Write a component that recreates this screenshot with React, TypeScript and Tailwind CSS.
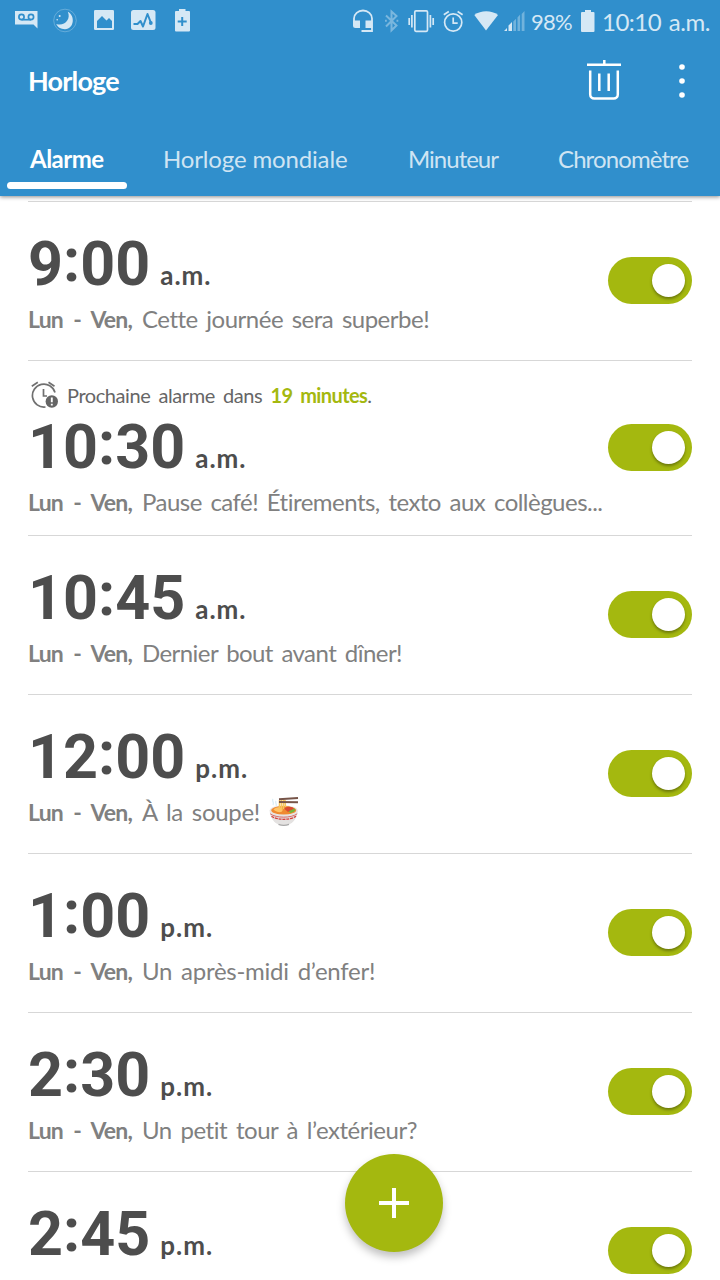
import React, { useState } from "react";
import clsx from "clsx";

interface Alarm {
    id: number;
    hour: string;
    minute: string;
    period: string;
    label: string;
    tracking: string;
    next?: boolean;
    soup?: boolean;
}

const alarms: Alarm[] = [
    { id: 1, hour: "9", minute: "00", period: "a.m.", label: "Cette journée sera superbe!", tracking: "tracking-[-0.5px]" },
    { id: 2, hour: "10", minute: "30", period: "a.m.", label: "Pause café! Étirements, texto aux collègues...", tracking: "tracking-[-0.52px]", next: true },
    { id: 3, hour: "10", minute: "45", period: "a.m.", label: "Dernier bout avant dîner!", tracking: "tracking-[-0.57px]" },
    { id: 4, hour: "12", minute: "00", period: "p.m.", label: "À la soupe!", tracking: "tracking-[-0.3px]", soup: true },
    { id: 5, hour: "1", minute: "00", period: "p.m.", label: "Un après-midi d’enfer!", tracking: "tracking-[-0.26px]" },
    { id: 6, hour: "2", minute: "30", period: "p.m.", label: "Un petit tour à l’extérieur?", tracking: "tracking-[-0.45px]" },
    { id: 7, hour: "2", minute: "45", period: "p.m.", label: "Une pause santé", tracking: "tracking-[-0.5px]" },
];

const tabs = [
    { name: "Alarme", className: "ml-[30px] w-[133px] font-bold text-white tracking-[-0.5px]" },
    { name: "Horloge mondiale", className: "w-[245px] tracking-[-0.15px]" },
    { name: "Minuteur", className: "w-[150px] tracking-[-1px]" },
    { name: "Chronomètre", className: "w-[134px] tracking-[-0.9px]" },
];

function StatusBar() {
    return (
        <div className="flex h-11 text-[#d5e8f5]">
            <svg className="ml-[15px]" width="23" height="44" fill="currentColor">
                <path d="M0 11h22.500v17.500l-4-4H0z" />
                <g fill="none" stroke="#308fcc" strokeWidth="1.700">
                    <circle cx="6.500" cy="17" r="2.600" />
                    <circle cx="16" cy="17" r="2.600" />
                    <path d="M6.500 19.700H16" />
                </g>
            </svg>
            <svg className="ml-[15px]" width="24" height="44" fill="currentColor">
                <circle cx="12" cy="20.500" r="11.300" fill="none" stroke="currentColor" strokeWidth="0.900" opacity="0.35" />
                <path d="M14.800 11.800c7.500 3.700 6.700 17-2.800 17.400-4.500 0-7.500-2.200-8.700-5.200 8 2.500 15-4.500 11.500-12.200z" />
                <circle cx="6.700" cy="16" r="1" />
                <circle cx="4.200" cy="19.800" r="0.800" />
            </svg>
            <svg className="ml-[17px]" width="20" height="44" fill="currentColor">
                <rect y="10" width="20" height="20" rx="1.300" />
                <path d="M3 28v-7l5-5 4.500 4.500L15 18l3 3v7z" fill="#308fcc" />
            </svg>
            <svg className="ml-[17px]" width="25" height="44" fill="currentColor">
                <rect y="10" width="24.500" height="20" rx="2.500" />
                <path d="M2.500 24h4l3-3 2.500 5.500 4.500-12.500 3.500 9" fill="none" stroke="#308fcc" strokeWidth="2" strokeLinejoin="round" />
                <circle cx="19.800" cy="23" r="1.900" fill="#308fcc" />
            </svg>
            <svg className="ml-[19px]" width="16" height="44" fill="currentColor">
                <path d="M4 9h6.500v2H14a1 1 0 0 1 1 1v18.500a1 1 0 0 1-1 1H1a1 1 0 0 1-1-1V12a1 1 0 0 1 1-1h3z" />
                <path d="M7.200 17v9M2.700 21.500h9" stroke="#308fcc" strokeWidth="2" />
            </svg>

            <svg className="ml-[162px]" width="21" height="44" fill="none" stroke="currentColor">
                <path d="M1 23v-4.500a9 8 0 0 1 18 0V31H8.500" strokeWidth="1.800" />
                <path d="M0 20.500h7V28H2.500A2.500 2.500 0 0 1 0 25.500zM12.500 20.500h7V28h-7z" fill="currentColor" stroke="none" />
            </svg>
            <svg className="ml-[11px] opacity-45" width="14" height="44" fill="none" stroke="currentColor" strokeWidth="2">
                <path d="m1 15.500 10.500 10-5 4.800V11.500l5 4.500L1 26.500M0 20.700h1.800M11.500 20.700h1.800" />
            </svg>
            <svg className="ml-[9px]" width="27" height="44" fill="none" stroke="currentColor" strokeWidth="1.700">
                <rect x="6.800" y="10.800" width="12.700" height="20.500" rx="1.200" />
                <path d="M3.900 15v12.500M1.200 18v7M22.400 15v12.500M25.200 18v7" />
            </svg>
            <svg className="ml-[8px]" width="21" height="44" fill="none" stroke="currentColor" strokeWidth="1.700">
                <circle cx="10.200" cy="22.500" r="8.600" />
                <path d="M10.200 17.500v5.700h4.500M.8 14.800l5-3.300M14.600 11.500l5 3.300" />
            </svg>
            <svg className="ml-[10px]" width="25" height="44" fill="currentColor">
                <path d="M.3 15C7 10 17.500 10 24 15L12 30.500z" />
            </svg>
            <svg className="ml-[5px]" width="22" height="44" fill="currentColor">
                <path d="M0 31l3-3v3zM4.500 31v-5.500L8 22v9z" />
                <path d="M9.300 31V21.500l2.700-2.800V31zM13.500 31V17.500l2.600-3V31zM17.700 31V14l2.800-3v20z" opacity="0.4" />
            </svg>
            <span className="ml-[5px] w-[50px] text-[22px] leading-[44px] tracking-[-0.7px] whitespace-nowrap">98%</span>
            <svg width="14" height="44" fill="currentColor">
                <path d="M4 10h6v2h2.500a1 1 0 0 1 1 1v18a1 1 0 0 1-1 1H1a1 1 0 0 1-1-1V13a1 1 0 0 1 1-1h3z" />
            </svg>
            <span className="ml-[7px] text-[24px] leading-[44px] tracking-[-0.5px] [word-spacing:2px] whitespace-nowrap">10:10 a.m.</span>
        </div>
    );
}

function NextAlarmIcon() {
    return (
        <svg className="mr-[8px]" width="28" height="28" viewBox="0 0 28 28" fill="none" stroke="#707070" strokeWidth="1.700">
            <path d="M24 11.500A11.500 11.500 0 1 0 14.500 26" />
            <path d="M12.500 8v7h3.500M.8 5.200l6-4M17.500 1.200l6 4" />
            <circle cx="20.800" cy="20.500" r="6.200" fill="#656565" stroke="none" />
            <path d="M20.800 16.500v4.800M20.800 22.800v1.800" stroke="#fff" strokeWidth="1.900" />
        </svg>
    );
}

function SoupIcon() {
    return (
        <svg className="ml-[9px] self-center" width="30" height="29" viewBox="0 0 30 29" fill="none">
            <path d="M4 2c-2 2 2 3 0 6M7 4c-1.500 2 1.500 3 0 5" stroke="#dceef5" strokeWidth="1.400" />
            <path d="M.7 13.500c0 7 4.500 12.500 9 14 3 .9 7 .9 10 0 4.500-1.500 9-7 9-14z" fill="#e4e2e1" />
            <ellipse cx="14.700" cy="13.500" rx="14" ry="5.300" fill="#e9e5e2" />
            <ellipse cx="14.700" cy="13.200" rx="12.500" ry="4.300" fill="#f08a30" />
            <path d="M4.500 12.500c3-3 8-3 9 0s-5 4-9 0z" fill="#ffc466" />
            <path d="M15 11.500c3-2.500 9-2 10 .5l-6 3z" fill="#d94b31" />
            <path d="m19.500 14.500 6-3c2 2-1.500 4-4 4.500z" fill="#6fb83d" />
            <path d="M10.500 3v9M12.500 3v10M14.500 3v9M16 3l.5 7" stroke="#f8c65b" strokeWidth="1.500" />
            <path d="M10 2.200 29 1M10 5l19 .3" stroke="#765448" strokeWidth="2" />
            <path d="M1.200 16.800c6 4.500 21 4.500 27 0" stroke="#d7504c" strokeWidth="0.800" />
            <path d="M2.500 19.300c6 4 18.500 4 24.500 0" stroke="#d7403c" strokeWidth="1.300" strokeDasharray="3 .8" />
            <path d="M9.500 27.300c3 1.200 7.500 1.200 10.500 0" stroke="#aaa" strokeWidth="1.300" />
        </svg>
    );
}

function Toggle() {
    const [on, setOn] = useState(true);
    return (
        <button
            onClick={() => setOn(!on)}
            className={clsx("flex h-[47px] w-[84px] shrink-0 items-center rounded-full px-[7px]", on ? "justify-end bg-[#a4b80f]" : "justify-start bg-gray-400")}
        >
            <span className="size-[33px] rounded-full bg-white shadow-[0_2px_3px_rgba(0,0,0,0.35)]" />
        </button>
    );
}

function AlarmRow({ alarm }: { alarm: Alarm }) {
    return (
        <div className={clsx("flex shrink-0 items-center justify-between border-t border-[#d7d7d7] pb-[2px]", alarm.next ? "h-[175px]" : "h-[159px]")}>
            <div className="flex h-full flex-col whitespace-nowrap">
                {alarm.next ? (
                    <div className="flex h-[53px] shrink-0 items-center pt-[14px] pl-[3px] text-[20px] text-[#666]">
                        <NextAlarmIcon />
                        <span className="tracking-[-0.43px] [word-spacing:3.500px]">
                            Prochaine alarme dans <b className="tracking-[-0.6px] text-[#a4b80f]">19 minutes</b>.
                        </span>
                    </div>
                ) : (
                    <div className="h-[29px] shrink-0" />
                )}
                <div className="flex h-[66px] shrink-0 items-baseline text-[#4d4d4d]">
                    <span className="font-['Roboto'] text-[61px] leading-[67px] font-bold">
                        {alarm.hour}
                        <span className="relative -top-[4px]">:</span>
                        {alarm.minute}
                    </span>
                    <span className="ml-[10px] text-[26px] font-bold tracking-[1px]">{alarm.period}</span>
                </div>
                <div className={clsx("flex h-[42px] shrink-0 items-baseline text-[24px] leading-[43px] text-[#808080] [word-spacing:3px]", alarm.tracking)}>
                    <span className="w-[114px] text-[23px] font-bold tracking-[-0.8px] [word-spacing:5.500px]">Lun - Ven,</span>
                    <span>{alarm.label}</span>
                    {alarm.soup && <SoupIcon />}
                </div>
            </div>
            <Toggle />
        </div>
    );
}

export default function App() {
    return (
        <div className="relative flex h-[1280px] w-[720px] flex-col overflow-hidden bg-white font-['Lato',sans-serif]">
            <header className="z-10 h-[196px] shrink-0 bg-[#308fcc] shadow-[0_1px_4px_rgba(0,0,0,0.45)]">
                <StatusBar />
                <div className="flex h-[73px] items-center pl-7 text-white">
                    <h1 className="pt-px text-[27px] font-bold tracking-[-0.8px]">Horloge</h1>
                    <svg className="ml-auto" width="34" height="42" viewBox="0 0 34 42" fill="none" stroke="currentColor" strokeWidth="2.500">
                        <path d="M0 4.700h34M17.300 0v5M3.200 10.500v24a4 4 0 0 0 4 4h19.600a4 4 0 0 0 4-4v-24M12.300 13.500V31M21.700 13.500V31" />
                    </svg>
                    <svg className="mr-[35px] ml-[58px]" width="6" height="36" viewBox="0 0 6 36" fill="currentColor">
                        <circle cx="3" cy="4" r="2.800" />
                        <circle cx="3" cy="18" r="2.800" />
                        <circle cx="3" cy="32" r="2.800" />
                    </svg>
                </div>
                <nav className="flex h-[65px] items-center text-[24px] text-[#cfe4f3] [word-spacing:3px]">
                    {tabs.map((tab) => (
                        <button key={tab.name} className={clsx("shrink-0 pt-[19px] text-left whitespace-nowrap", tab.className)}>
                            {tab.name}
                        </button>
                    ))}
                </nav>
                <div className="ml-[7px] h-[7px] w-[120px] rounded-sm bg-white" />
            </header>

            <main className="flex flex-col px-7 pt-[5px]">
                {alarms.map((alarm) => (
                    <AlarmRow key={alarm.id} alarm={alarm} />
                ))}
            </main>

            <button className="absolute top-[1154px] left-[345px] flex size-[98px] items-center justify-center rounded-full bg-[#a4b80f] shadow-[0_5px_8px_rgba(0,0,0,0.25)]">
                <svg width="30" height="30" stroke="#fff" strokeWidth="4">
                    <path d="M15 0v30M0 15h30" />
                </svg>
            </button>
        </div>
    );
}
